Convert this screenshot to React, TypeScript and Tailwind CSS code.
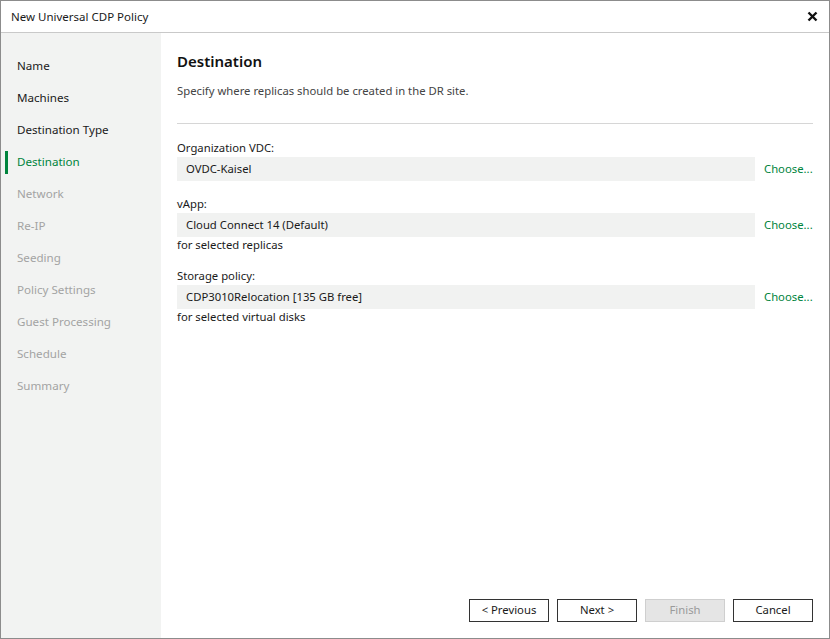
import { useState } from 'react';

const steps = [
  { label: 'Name', state: 'done' },
  { label: 'Machines', state: 'done' },
  { label: 'Destination Type', state: 'done' },
  { label: 'Destination', state: 'current' },
  { label: 'Network', state: 'todo' },
  { label: 'Re-IP', state: 'todo' },
  { label: 'Seeding', state: 'todo' },
  { label: 'Policy Settings', state: 'todo' },
  { label: 'Guest Processing', state: 'todo' },
  { label: 'Schedule', state: 'todo' },
  { label: 'Summary', state: 'todo' },
];

function Field({ label, value, note }: { label: string; value: string; note?: string }) {
  return (
    <div className="mb-[14px]">
      <p className="h-[18px] leading-[18px]">{label}</p>
      <div className="flex items-center">
        <div className="flex h-6 flex-1 items-center bg-[#f1f2f1] pl-[9px]">{value}</div>
        <button className="w-[58px] pl-[9px] text-left text-[#00843d]">Choose...</button>
      </div>
      {note ? <p className="h-[16px] leading-[16px]">{note}</p> : null}
    </div>
  );
}

export default function App() {
  const [current] = useState(3);

  return (
    <div
      className="flex h-[639px] w-[830px] flex-col border border-[#8c8c8c] bg-white text-[11.3px] text-[#1a1a1a]"
      style={{ fontFamily: '"Noto Sans", sans-serif' }}
    >
      <div className="flex h-[32px] shrink-0 items-center justify-between border-b border-[#c9c9c9] pl-[10px] pr-[10px]">
        <span className="text-[11.5px]">New Universal CDP Policy</span>
        <svg width="11" height="11" viewBox="0 0 11 11" className="mr-[1px]">
          <path d="M1.5 1.5 L9.5 9.5 M9.5 1.5 L1.5 9.5" stroke="#111" strokeWidth="2.4" />
        </svg>
      </div>

      <div className="flex flex-1">
        <aside className="w-[160px] shrink-0 bg-[#f2f3f2] pt-[17px] text-[11.6px]">
          {steps.map((step, i) => (
            <div key={step.label} className="relative flex h-8 items-center pl-4">
              {i === current ? (
                <span className="absolute left-[4px] top-[5px] h-[23px] w-[3px] bg-[#00843d]" />
              ) : null}
              <span
                className={
                  step.state === 'current'
                    ? 'text-[#00843d]'
                    : step.state === 'done'
                      ? 'text-[#1a1a1a]'
                      : 'text-[#a3a3a3]'
                }
              >
                {step.label}
              </span>
            </div>
          ))}
        </aside>

        <main className="flex flex-1 flex-col pl-4 pr-4">
          <h1 className="mt-[16px] h-[24px] text-[15px] font-semibold leading-[24px] text-[#111]">
            Destination
          </h1>
          <p className="mt-[10px] h-[16px] leading-[16px] text-[#444]">
            Specify where replicas should be created in the DR site.
          </p>
          <div className="mt-[24px] mb-[15px] h-px bg-[#d6d6d6]" />

          <Field label="Organization VDC:" value="OVDC-Kaisel" />
          <Field label="vApp:" value="Cloud Connect 14 (Default)" note="for selected replicas" />
          <Field
            label="Storage policy:"
            value="CDP3010Relocation [135 GB free]"
            note="for selected virtual disks"
          />

          <div className="mt-auto mb-[16px] flex justify-end gap-2">
            <button className="h-[23px] w-[80px] border border-[#333] bg-white">&lt; Previous</button>
            <button className="h-[23px] w-[80px] border border-[#333] bg-white">Next &gt;</button>
            <button className="h-[23px] w-[80px] border border-[#cfcfcf] bg-[#e5e5e5] text-[#9a9a9a]">
              Finish
            </button>
            <button className="h-[23px] w-[80px] border border-[#333] bg-white">Cancel</button>
          </div>
        </main>
      </div>
    </div>
  );
}
